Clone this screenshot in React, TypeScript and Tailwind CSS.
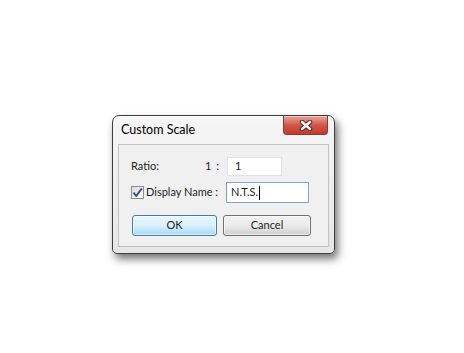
import React from 'react'

function CloseButton() {
  return (
    <div className="w-[45px] h-[19px] rounded-b-[4px] border border-t-0 border-[#8a3a33] bg-gradient-to-b from-[#e8a59c] via-[#d2574a] to-[#c4392b] flex items-center justify-center shadow-[inset_0_1px_0_rgba(255,255,255,0.4)]">
      <svg width="14" height="11" viewBox="0 0 14 11">
        <path
          d="M3 2 L11 9 M11 2 L3 9"
          stroke="#5a1f1a"
          strokeWidth="4.4"
          strokeLinecap="round"
        />
        <path
          d="M3 2 L11 9 M11 2 L3 9"
          stroke="#ffffff"
          strokeWidth="2.6"
          strokeLinecap="round"
        />
      </svg>
    </div>
  )
}

function CheckBox() {
  return (
    <div className="w-[13px] h-[13px] shrink-0 border border-[#8e8f8f] bg-gradient-to-br from-[#dcdcdc] to-[#fafafa] flex items-center justify-center">
      <svg width="11" height="11" viewBox="0 0 11 11">
        <path d="M1.5 5.5 L4.2 9 L9.8 1.5" stroke="#2f4f8f" strokeWidth="2" fill="none" strokeLinejoin="round" />
      </svg>
    </div>
  )
}

export default function App() {
  return (
    <div className="w-[464px] h-[353px] bg-white overflow-hidden font-['Lato','Noto_Sans',sans-serif] text-[11px] text-[#1e1e1e] whitespace-nowrap">
      <div className="ml-[112px] mt-[115px] w-[223px] h-[139px] rounded-t-[7px] rounded-b-[5px] border border-[#3f3f3f] bg-gradient-to-b from-[#f6f6f6] to-[#e6e6e6] shadow-[3px_5px_9px_rgba(0,0,0,0.55)] flex flex-col px-[5px] pb-[6px]">
        {/* title bar */}
        <div className="h-[28px] flex justify-between items-start">
          <span className="self-center pl-[3px] pt-[1px] text-[12.5px] text-black">Custom Scale</span>
          <div className="mr-[1px]">
            <CloseButton />
          </div>
        </div>

        {/* client area */}
        <div className="flex-1 border border-[#c2c2c2] bg-[#f0f0f0] pl-[12px] pt-[12px] flex flex-col">
          <div className="flex items-center h-[19px]">
            <div className="w-[96px] flex justify-between pr-[7px]">
              <span>Ratio:</span>
              <span className="tracking-[1px]">1 :</span>
            </div>
            <div className="w-[55px] h-[19px] bg-white border border-[#e3e3e3] pl-[7px] flex items-center">1</div>
          </div>

          <div className="flex items-center h-[21px] mt-[6px]">
            <div className="w-[95px] flex items-center gap-[2px]">
              <CheckBox />
              <span>Display Name :</span>
            </div>
            <div className="w-[83px] h-[21px] bg-white border border-[#7ea4c7] pl-[4px] flex items-center">
              N.T.S.<span className="w-px h-[14px] bg-black ml-[1px]" />
            </div>
          </div>

          <div className="flex gap-[6px] mt-[12px] pl-[1px]">
            <div className="w-[85px] h-[21px] rounded-[3px] border border-[#3c7fb1] bg-gradient-to-b from-[#eaf6fd] via-[#d9f0fc] to-[#a7d9f5] flex items-center justify-center shadow-[inset_0_0_0_1px_rgba(255,255,255,0.6)]">
              OK
            </div>
            <div className="w-[88px] h-[21px] rounded-[3px] border border-[#707070] bg-gradient-to-b from-[#f2f2f2] via-[#ebebeb] to-[#cfcfcf] flex items-center justify-center shadow-[inset_0_0_0_1px_rgba(255,255,255,0.6)]">
              Cancel
            </div>
          </div>
        </div>
      </div>
    </div>
  )
}
